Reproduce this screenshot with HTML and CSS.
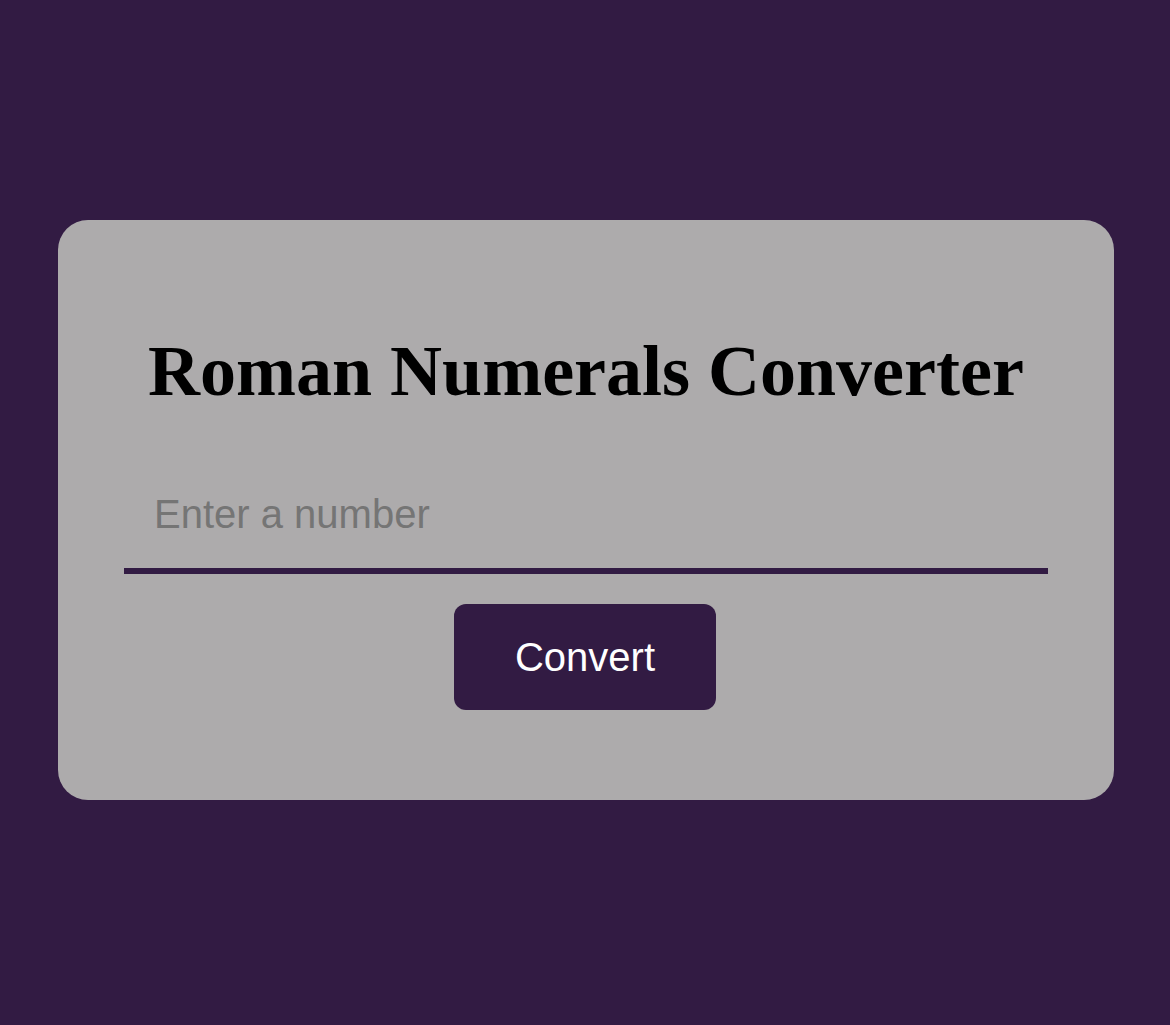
FILE: index.html
```html
<!DOCTYPE html>
<html lang="en">
<head>
<meta charset="utf-8">
<title>Roman Numerals Converter</title>
<link rel="stylesheet" href="styles.css">
</head>
<body>
  <main class="page">
    <section class="card">
      <h1 class="title">Roman Numerals Converter</h1>
      <input class="number-input" type="number" placeholder="Enter a number">
      <button class="convert-btn" type="button">Convert</button>
    </section>
  </main>
</body>
</html>
```

FILE: styles.css
```css
html, body {
  margin: 0;
  padding: 0;
}

body {
  background: #321b43;
  font-family: "Liberation Sans", Arial, sans-serif;
}

.page {
  display: flex;
  justify-content: center;
  padding-top: 220px;
  padding-left: 2px;
}

.card {
  width: 1056px;
  box-sizing: border-box;
  background: #adabac;
  border-radius: 30px;
  padding: 110px 66px 90px;
  display: flex;
  flex-direction: column;
  align-items: center;
}

.title {
  margin: 0 0 46px;
  font-family: "Liberation Serif", "Times New Roman", serif;
  font-weight: bold;
  font-size: 72px;
  line-height: 82px;
  color: #000;
  text-align: center;
}

.number-input {
  width: 100%;
  box-sizing: border-box;
  background: transparent;
  border: none;
  border-bottom: 6px solid #321b43;
  outline: none;
  padding: 33px 30px 31px;
  font-family: "Liberation Sans", Arial, sans-serif;
  font-size: 40px;
  line-height: 46px;
  height: 116px;
  color: #000;
}

.number-input::placeholder {
  color: #757575;
}

.convert-btn {
  margin-top: 30px;
  margin-right: 2px;
  background: #321b43;
  color: #fff;
  border: none;
  border-radius: 12px;
  padding: 30px 61px;
  font-family: "Liberation Sans", Arial, sans-serif;
  font-size: 40px;
  line-height: 46px;
  cursor: pointer;
}
```
